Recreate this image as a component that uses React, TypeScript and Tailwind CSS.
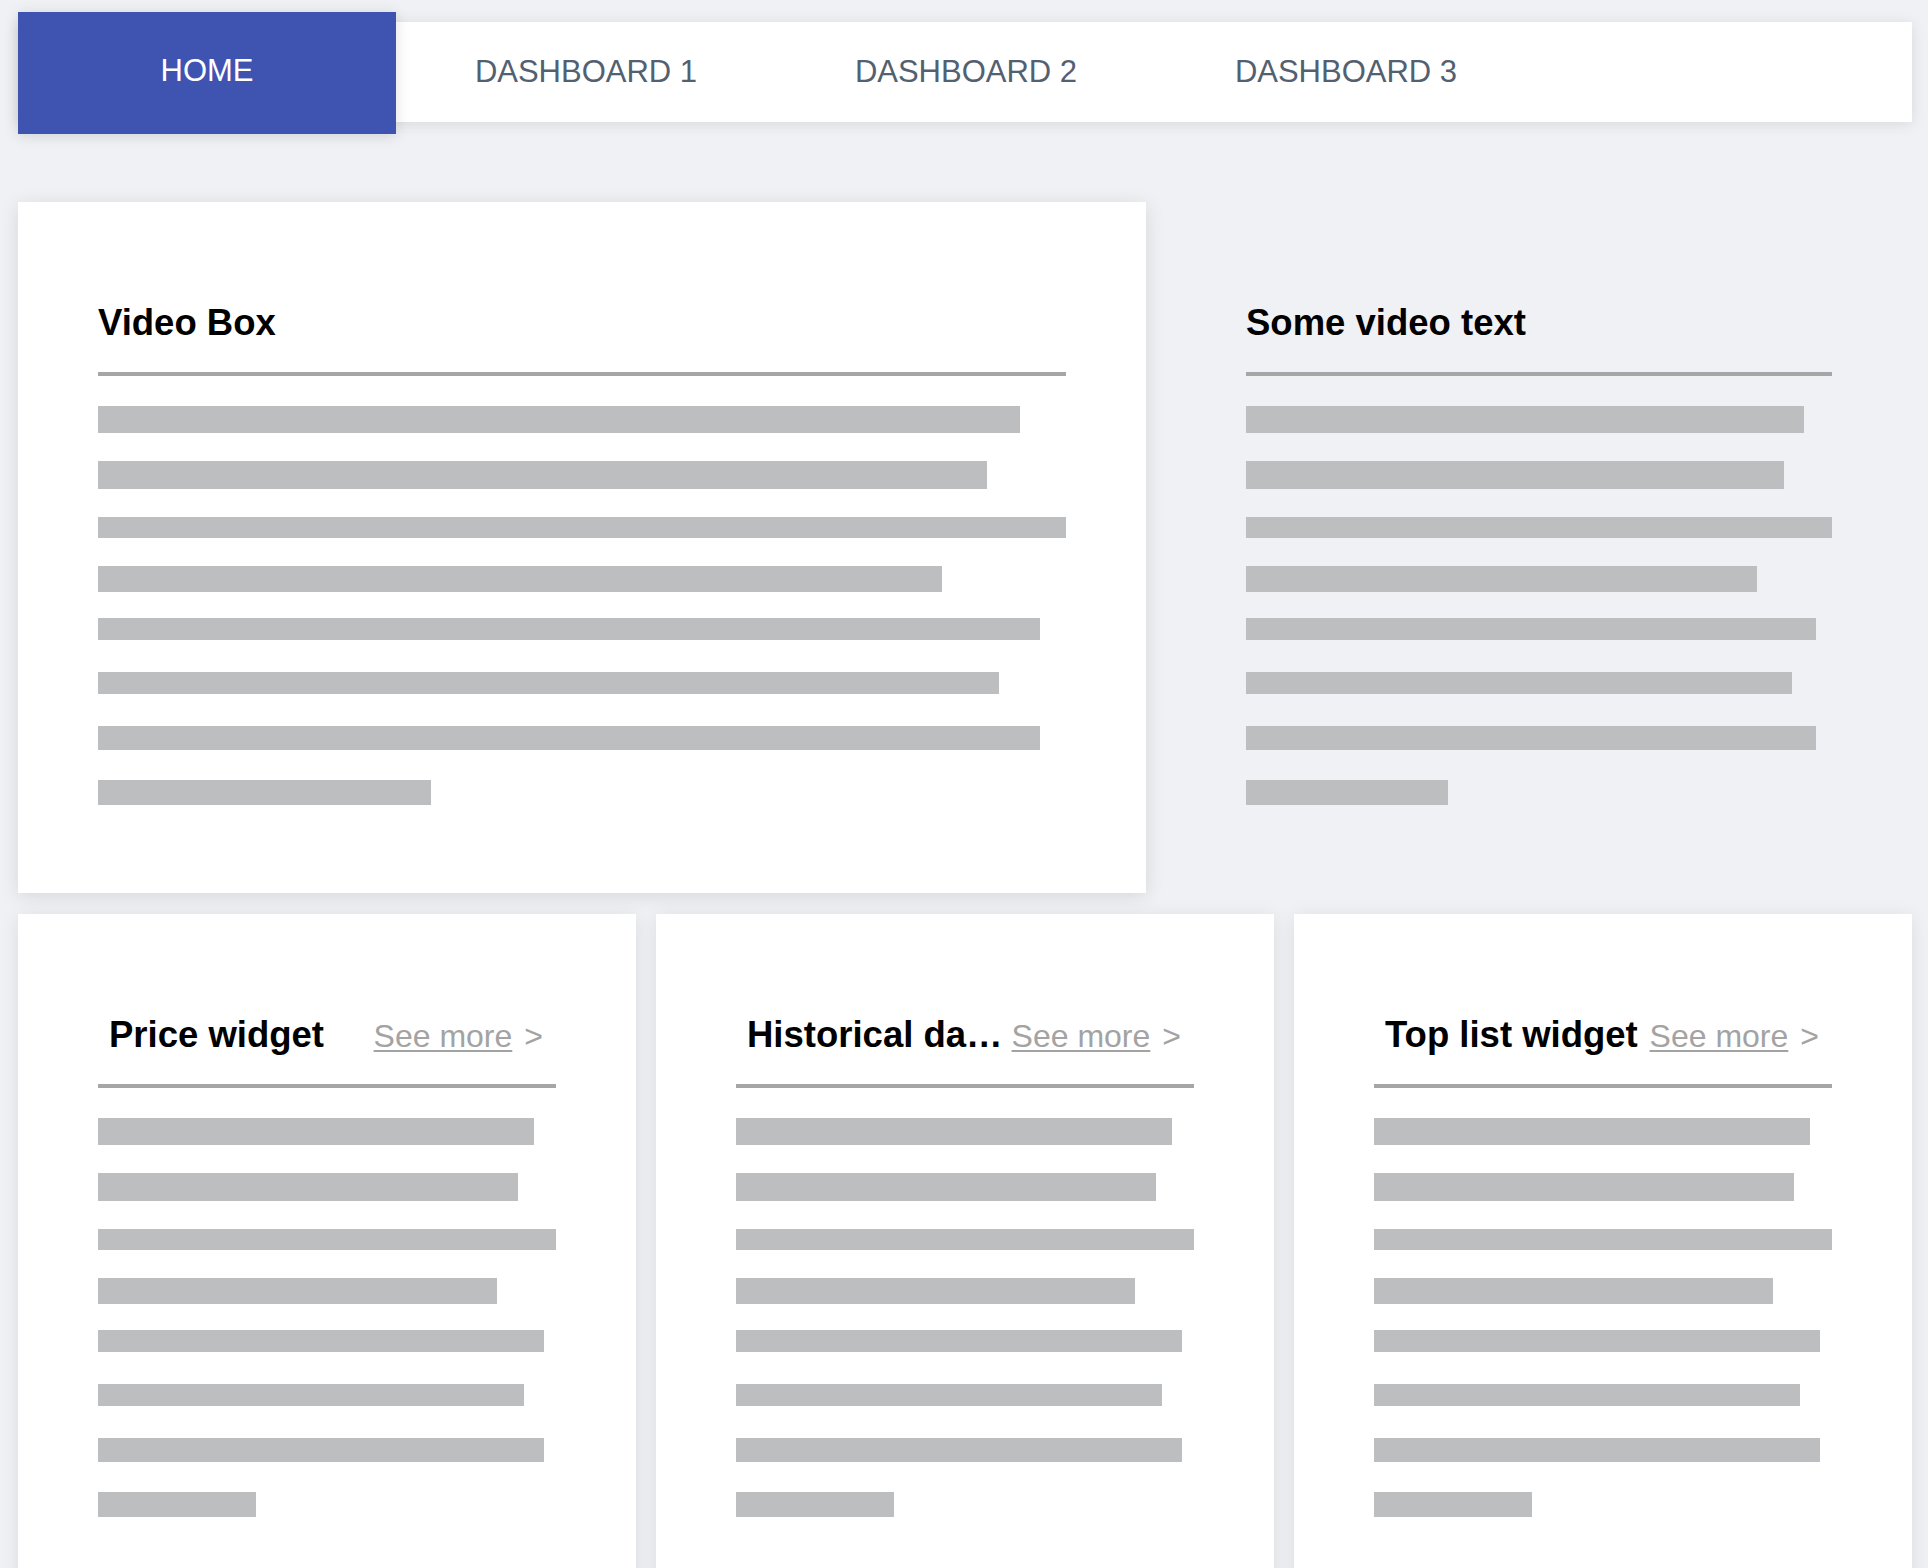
const TABS = ["HOME", "DASHBOARD 1", "DASHBOARD 2", "DASHBOARD 3"];

// placeholder text lines: width in %, height and top gap in px
const LINES = [
  { w: "95.2%", h: 27, mt: 30 },
  { w: "91.8%", h: 28, mt: 28 },
  { w: "100%", h: 21, mt: 28 },
  { w: "87.2%", h: 26, mt: 28 },
  { w: "97.3%", h: 22, mt: 26 },
  { w: "93.1%", h: 22, mt: 32 },
  { w: "97.3%", h: 24, mt: 32 },
  { w: "34.4%", h: 25, mt: 30 },
];

const WIDGETS = ["Price widget", "Historical data widget", "Top list widget"];

const Lines = () => (
  <div>
    {LINES.map((line, i) => (
      <div
        key={i}
        className="bg-[#bdbec0]"
        style={{ width: line.w, height: line.h, marginTop: line.mt }}
      />
    ))}
  </div>
);

const Divider = () => <div className="mt-[29px] h-[4px] bg-[#a6a6a6]" />;

const VideoBlock = ({ title, card }: { title: string; card?: boolean }) => (
  <div
    className={
      card
        ? "bg-white px-[80px] pt-[100px] pb-[88px] shadow-[0_3px_18px_rgba(0,0,0,0.11)]"
        : "px-[80px] pt-[100px] pb-[88px]"
    }
  >
    <h2 className="text-[36.5px] font-bold leading-[41px] text-black">{title}</h2>
    <Divider />
    <Lines />
  </div>
);

const Widget = ({ title }: { title: string }) => (
  <div className="bg-white px-[80px] pt-[100px] pb-[88px] shadow-[0_3px_18px_rgba(0,0,0,0.09)]">
    <div className="flex items-baseline gap-[8px] pl-[11px] pr-[13px]">
      <h3 className="min-w-0 flex-1 truncate text-[36.5px] font-bold leading-[41px] text-black">
        {title}
      </h3>
      <a className="shrink-0 cursor-pointer text-[32px] leading-[32px] text-[#a3a3a3]">
        <span className="underline decoration-2 underline-offset-[3px]">See more</span>
        <span className="ml-[12px]">&gt;</span>
      </a>
    </div>
    <Divider />
    <Lines />
  </div>
);

export default function App() {
  return (
    <div
      className="min-h-screen bg-[#f0f1f5] pl-[18px] pr-[16px] pt-[22px]"
      style={{ fontFamily: '"Liberation Sans", Arial, Helvetica, sans-serif' }}
    >
      <nav className="flex h-[100px] bg-white shadow-[0_2px_14px_rgba(0,0,0,0.1)]">
        {TABS.map((tab, i) =>
          i === 0 ? (
            <div
              key={tab}
              className="-mt-[10px] -mb-[12px] flex w-[378px] items-center justify-center bg-[#3f54b0] pb-[4px] text-[31px] text-white shadow-[0_2px_14px_rgba(0,0,0,0.12)]"
            >
              {tab}
            </div>
          ) : (
            <div
              key={tab}
              className="flex w-[380px] items-center justify-center text-[31px] text-[#526070]"
            >
              {tab}
            </div>
          ),
        )}
      </nav>

      <div className="mt-[80px] grid grid-cols-[1128px_1fr] gap-[20px]">
        <VideoBlock title="Video Box" card />
        <VideoBlock title="Some video text" />
      </div>

      <div className="mt-[21px] grid grid-cols-3 gap-[20px]">
        {WIDGETS.map((w) => (
          <Widget key={w} title={w} />
        ))}
      </div>
    </div>
  );
}
